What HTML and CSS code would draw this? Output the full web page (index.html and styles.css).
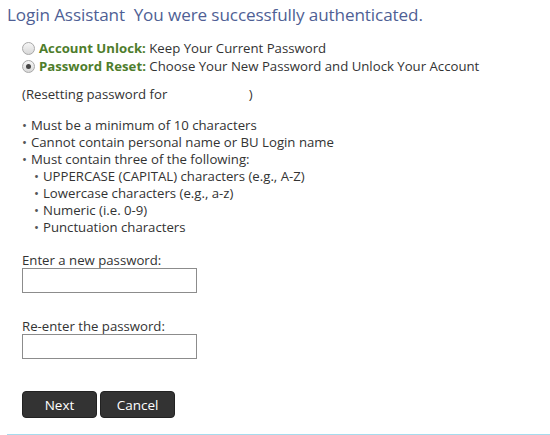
FILE: index.html
```html
<!DOCTYPE html>
<html>
<head>
<meta charset="utf-8">
<link rel="stylesheet" href="styles.css">
</head>
<body>
<div class="page">
  <h1 class="title">Login Assistant&nbsp; You were successfully authenticated.</h1>
  <div class="content">
    <div class="options">
      <label class="opt"><span class="radio"></span><b>Account Unlock:</b>&nbsp;Keep Your Current Password</label>
      <label class="opt"><span class="radio checked"></span><b>Password Reset:</b>&nbsp;Choose Your New Password and Unlock Your Account</label>
    </div>
    <p class="resetting">(Resetting password for <span class="user"></span>)</p>
    <ul class="rules">
      <li>Must be a minimum of 10 characters</li>
      <li>Cannot contain personal name or BU Login name</li>
      <li>Must contain three of the following:
        <ul class="sub">
          <li>UPPERCASE (CAPITAL) characters (e.g., A-Z)</li>
          <li>Lowercase characters (e.g., a-z)</li>
          <li>Numeric (i.e. 0-9)</li>
          <li>Punctuation characters</li>
        </ul>
      </li>
    </ul>
    <div class="field">
      <label class="flabel">Enter a new password:</label>
      <input class="input" type="password">
    </div>
    <div class="field second">
      <label class="flabel">Re-enter the password:</label>
      <input class="input" type="password">
    </div>
    <div class="buttons">
      <button class="btn">Next</button>
      <button class="btn">Cancel</button>
    </div>
  </div>
  <div class="rule-line"></div>
</div>
</body>
</html>
```
FILE: styles.css
```css
html, body {
  margin: 0;
  padding: 0;
  background: #fff;
}
body {
  font-family: "Open Sans", "Noto Sans", sans-serif;
  color: #333;
  font-size: 13.2px;
}
.page {
  padding: 4px 0 0 7px;
}
.title {
  margin: 0;
  font-weight: 400;
  font-size: 17.1px;
  line-height: 22px;
  color: #4f5f95;
  letter-spacing: -0.1px;
}
.content {
  padding-left: 15px;
}
.options {
  margin-top: 13px;
  display: flex;
  flex-direction: column;
}
.opt {
  display: flex;
  align-items: center;
  line-height: 18px;
  height: 18px;
}
.opt b {
  color: #4e7d2c;
  font-weight: 700;
}
.radio {
  width: 13px;
  height: 13px;
  border-radius: 50%;
  border: 1px solid #a8a8a8;
  background: linear-gradient(#f6f6f6, #d8d8d8);
  margin-right: 4px;
  box-sizing: border-box;
  position: relative;
  flex: none;
}
.radio.checked::after {
  content: "";
  position: absolute;
  left: 3px;
  top: 3px;
  width: 5px;
  height: 5px;
  border-radius: 50%;
  background: #444;
}
.resetting {
  margin: 10px 0 0;
  line-height: 18px;
}
.user {
  display: inline-block;
  width: 78px;
}
.rules {
  margin: 14px 0 0;
  padding: 0;
  list-style: none;
  line-height: 17px;
}
.rules li::before {
  content: "\2022";
  margin-right: 4px;
  color: #555;
}
.sub {
  list-style: none;
  margin: 0;
  padding-left: 12px;
}
.field {
  margin-top: 16px;
  display: flex;
  flex-direction: column;
  align-items: flex-start;
}
.field.second {
  margin-top: 25px;
}
.flabel {
  line-height: 16px;
}
.input {
  width: 175px;
  height: 25px;
  box-sizing: border-box;
  border: 1px solid #8c8c8c;
  margin: 0;
  padding: 0 3px;
}
.buttons {
  margin-top: 32px;
  display: flex;
  gap: 3px;
}
.btn {
  width: 75px;
  height: 27px;
  background: #333;
  color: #fff;
  border: 1px solid #222;
  border-radius: 4px;
  font-family: "Open Sans", "Noto Sans", sans-serif;
  font-size: 13.5px;
  padding: 0;
}
.rule-line {
  margin-top: 16px;
  height: 1px;
  background: #a6dbed;
}
```
